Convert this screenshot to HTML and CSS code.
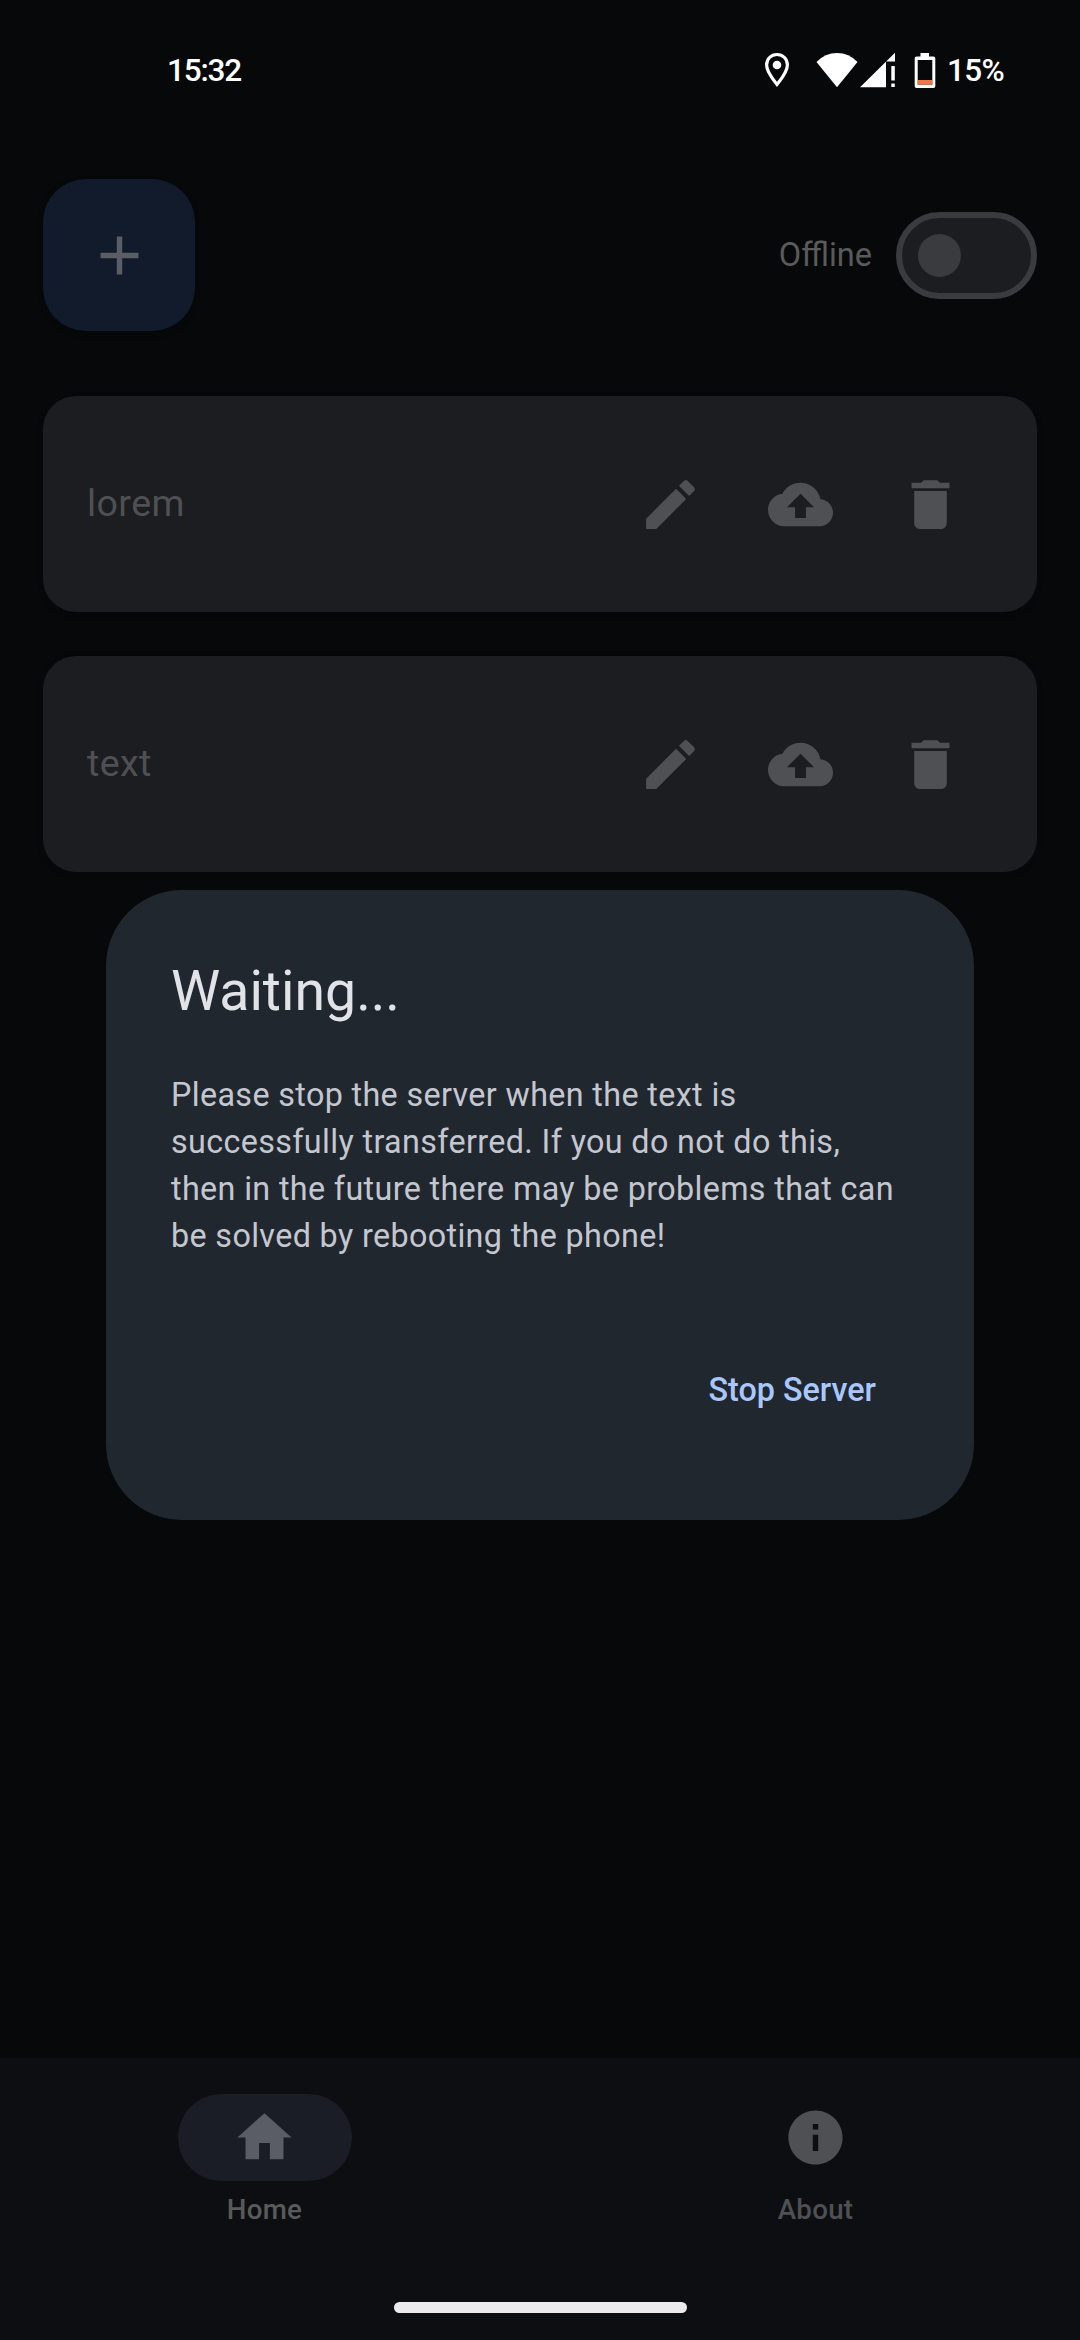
FILE: index.html
```html
<!DOCTYPE html>
<html lang="en">
<head>
<meta charset="utf-8">
<title>Texts</title>
<link rel="stylesheet" href="styles.css">
</head>
<body>
<svg class="sprite" aria-hidden="true">
  <symbol id="edit" viewBox="0 0 24 24"><path d="M3 17.25V21h3.75L17.81 9.94l-3.75-3.75L3 17.25zM20.71 7.04c.39-.39.39-1.02 0-1.41l-2.34-2.34c-.39-.39-1.02-.39-1.41 0l-1.83 1.83 3.75 3.75 1.83-1.83z"/></symbol>
  <symbol id="upload" viewBox="0 0 24 24"><path d="M19.35 10.04C18.67 6.59 15.64 4 12 4 9.11 4 6.6 5.64 5.35 8.04 2.34 8.36 0 10.91 0 14c0 3.31 2.69 6 6 6h13c2.76 0 5-2.24 5-5 0-2.64-2.05-4.78-4.65-4.96zM14 13v4h-4v-4H7l5-5 5 5h-3z"/></symbol>
  <symbol id="trash" viewBox="0 0 24 24"><path d="M6 19c0 1.100.9 2 2 2h8c1.100 0 2-.9 2-2V7H6v12zM19 4h-3.500l-1-1h-5l-1 1H5v2h14V4z"/></symbol>
</svg>
<div class="screen">
  <header class="status">
    <span class="clock">15:32</span>
    <div class="status-icons">
      <svg class="pin" width="26" height="36" viewBox="0 0 26 36"><path d="M13 2.500C7 2.500 2.600 7 2.600 13c0 7 6.500 14.500 10.400 19.500C16.900 27.500 23.400 20 23.400 13 23.400 7 19 2.500 13 2.500z" fill="none" stroke="#fff" stroke-width="3.200"/><circle cx="13" cy="13" r="4.300" fill="#fff"/></svg>
      <svg class="wifi" width="42" height="36" viewBox="0 0 42 36"><path d="M0.500 10Q9 1 21 1T41.500 10L21 35.300z" fill="#fff"/></svg>
      <svg class="signal" width="36" height="36" viewBox="0 0 36 36"><path d="M0 35.200 35 0.800V9.500H26V35.200z" fill="#fff"/><path d="M31.300 14h3.500v14.500h-3.500zM31.300 31.500h3.500v3.500h-3.500z" fill="#fff"/></svg>
      <svg class="battery" width="22" height="36" viewBox="0 0 22 36"><path d="M6.500 1h8.500v3.500h4.500a1.800 1.800 0 0 1 1.800 1.800v28a1.800 1.800 0 0 1-1.800 1.700H2.500a1.800 1.800 0 0 1-1.800-1.700v-28a1.800 1.800 0 0 1 1.800-1.800h4zM3.700 8v24.800h14.600V8z" fill="#fff" fill-rule="evenodd"/><path d="M3.700 28h14.600v4.800H3.700z" fill="#f1774b"/></svg>
      <span class="percent">15%</span>
    </div>
  </header>

  <main class="content">
    <div class="toolbar">
      <button class="fab"><svg class="icon" viewBox="0 0 24 24"><path d="M19 13h-6v6h-2v-6H5v-2h6V5h2v6h6v2z"/></svg></button>
      <div class="mode"><span class="mode-label">Offline</span><span class="switch"><span class="thumb"></span></span></div>
    </div>
    <article class="card">
      <span class="card-title">lorem</span>
      <div class="actions">
        <button class="action"><svg class="icon"><use href="#edit"/></svg></button>
        <button class="action"><svg class="icon"><use href="#upload"/></svg></button>
        <button class="action"><svg class="icon"><use href="#trash"/></svg></button>
      </div>
    </article>
    <article class="card">
      <span class="card-title">text</span>
      <div class="actions">
        <button class="action"><svg class="icon"><use href="#edit"/></svg></button>
        <button class="action"><svg class="icon"><use href="#upload"/></svg></button>
        <button class="action"><svg class="icon"><use href="#trash"/></svg></button>
      </div>
    </article>
  </main>

  <nav class="nav">
    <div class="tabs">
      <a class="tab active"><span class="pill"><svg class="icon" viewBox="0 0 24 24"><path d="M10 20v-6h4v6h5v-8h3L12 3 2 12h3v8z"/></svg></span><span>Home</span></a>
      <a class="tab"><span class="pill"><svg class="icon" viewBox="0 0 24 24"><path d="M12 2C6.480 2 2 6.480 2 12s4.480 10 10 10 10-4.480 10-10S17.520 2 12 2zm1 15h-2v-6h2v6zm0-8h-2V7h2v2z"/></svg></span><span>About</span></a>
    </div>
    <span class="handle"></span>
  </nav>

  <section class="dialog" role="dialog">
    <h1 class="dialog-title">Waiting...</h1>
    <p class="dialog-text">Please stop the server when the text is<br>successfully transferred. If you do not do this,<br>then in the future there may be problems that can<br>be solved by rebooting the phone!</p>
    <button class="confirm">Stop Server</button>
  </section>
</div>
</body>
</html>
```
FILE: styles.css
```css
* { box-sizing: border-box; }
body { margin: 0; background: #060809; font-family: Roboto, "Liberation Sans", sans-serif; }
button { border: 0; margin: 0; padding: 0; background: none; font-family: inherit; color: inherit; }
.sprite { position: absolute; width: 0; height: 0; }
.screen { position: relative; width: 1080px; height: 2340px; overflow: hidden; display: flex; flex-direction: column; background: #060809; }
.icon { display: block; width: 65px; height: 65px; fill: currentColor; }

.status { display: flex; justify-content: space-between; align-items: center; height: 136px; padding: 4px 74px 0 167px; color: #fff; font: 500 31.5px/40px Roboto, sans-serif; letter-spacing: -1.2px; }
.clock { padding-top: 1px; }
.status-icons { display: flex; align-items: center; }
.wifi { margin-left: 26px; }
.signal { margin-left: 2.5px; }
.battery { margin-left: 18px; }
.percent { width: 59px; margin-left: 11px; padding-top: 1px; white-space: nowrap; letter-spacing: -.6px; }

.content { flex: 1; display: flex; flex-direction: column; gap: 44px; padding: 43px 43px 0; }
.toolbar { display: flex; justify-content: space-between; align-items: center; height: 152px; margin-bottom: 21px; }
.fab { display: flex; align-items: center; justify-content: center; width: 152px; height: 152px; border-radius: 43px; background: #111b2b; color: #5a5d66; box-shadow: 0 2px 6px rgba(0, 0, 0, .2); }
.mode { display: flex; align-items: center; gap: 24px; color: #5a5a5b; }
.mode-label { font-size: 32.5px; }
.switch { display: flex; align-items: center; width: 141px; height: 87px; padding-left: 16px; border: 6px solid #3a3b3e; border-radius: 44px; background: #1c1d20; }
.thumb { width: 43px; height: 43px; border-radius: 50%; background: #3a3b3e; }

.card { display: flex; align-items: center; justify-content: space-between; height: 216px; padding: 0 42px 0 44px; border-radius: 33px; background: #1c1d20; color: #4f5054; box-shadow: 0 2px 6px rgba(0, 0, 0, .2); }
.card-title { font-size: 37.6px; letter-spacing: .4px; margin-bottom: 2px; }
.actions { display: flex; }
.action { display: flex; align-items: center; justify-content: center; width: 130px; height: 130px; }

.nav { display: flex; flex-direction: column; align-items: center; height: 282px; padding-top: 36px; background: #0d0e12; color: #4f5054; }
.tabs { display: grid; grid-template-columns: 1fr 1fr; gap: 22px; width: 100%; height: 208px; }
.tab { display: flex; flex-direction: column; align-items: center; gap: 10px; font-size: 27.7px; line-height: 37px; font-weight: 500; letter-spacing: .3px; }
.pill { display: flex; align-items: center; justify-content: center; width: 174px; height: 87px; border-radius: 44px; }
.active { color: #5a5a5b; }
.active .pill { background: #1a1d25; color: #5a5d66; }
.handle { width: 293px; height: 11px; border-radius: 6px; background: #ebebeb; }

.dialog { position: absolute; left: 106px; top: 890px; width: 868px; height: 630px; padding: 65px; border-radius: 76px; background: #21272e; display: flex; flex-direction: column; }
.dialog-title { margin: 0; font-size: 55.4px; line-height: 74px; font-weight: 400; color: #e2e2e9; }
.dialog-text { margin: 43px 0 0; font-size: 32.3px; line-height: 47px; letter-spacing: .36px; white-space: nowrap; color: #c4c6d0; }
.confirm { align-self: flex-end; margin: 76px 0 0; padding: 0 33px; height: 108px; font-size: 32.3px; font-weight: 500; letter-spacing: 0; color: #a9c7ff; }
```
